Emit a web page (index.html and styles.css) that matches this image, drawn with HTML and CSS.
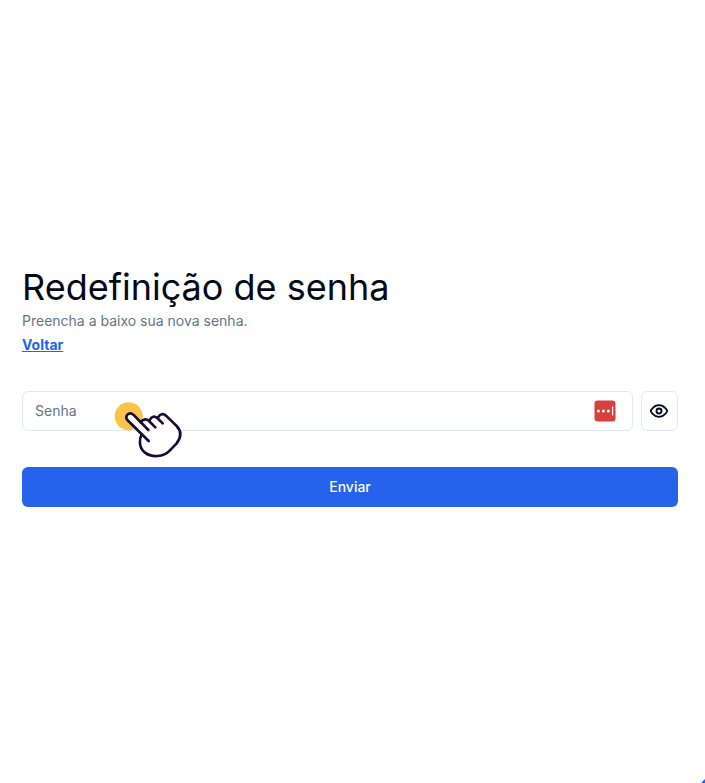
FILE: index.html
```html
<!DOCTYPE html>
<html lang="pt-BR">
<head>
<meta charset="utf-8">
<title>Redefinição de senha</title>
<link rel="stylesheet" href="styles.css">
</head>
<body>
<main class="page">
  <h1 class="title">Redefinição de senha</h1>
  <p class="subtitle">Preencha a baixo sua nova senha.</p>
  <a class="back" href="#">Voltar</a>
  <form class="form">
    <div class="row">
      <div class="field">
        <span class="placeholder">Senha</span>
        <svg class="manager" viewBox="0 0 22 22" aria-hidden="true">
          <rect x=".5" y=".5" width="21" height="21" rx="3" fill="#d6403d"/>
          <g fill="#fff"><circle cx="4.4" cy="11" r="1.5"/><circle cx="9.3" cy="11" r="1.5"/><circle cx="14.3" cy="11" r="1.5"/><rect x="18" y="6.5" width="1.2" height="9"/></g>
        </svg>
      </div>
      <button class="toggle" type="button" aria-label="Mostrar senha">
        <svg class="eye" viewBox="0 0 24 24" fill="none" stroke="currentColor" stroke-width="2.2" stroke-linecap="round" stroke-linejoin="round"><path d="M2 12s3-7 10-7 10 7 10 7-3 7-10 7-10-7-10-7Z"/><circle cx="12" cy="12" r="3"/></svg>
      </button>
      <svg class="pointer" viewBox="0 0 270 240" aria-hidden="true">
        <circle cx="71" cy="94" r="42" fill="#fbc34b"/>
        <path fill="#fff" d="M132 168L67 105C57 94 72 78 85 89L107 111Q120 97 134 107Q144 88 159 98Q169 81 183 92L215 123C230 139 228 158 215 175L194 197C176 217 139 218 120 203C101 188 102 162 110 148Z"/>
        <g fill="none" stroke="#150b36" stroke-width="8" stroke-linecap="round" stroke-linejoin="round">
          <path d="M131 168L67 105C57 94 72 78 85 89L130 135"/>
          <path d="M107 111Q120 97 132 108L151 127"/>
          <path d="M134 105Q144 88 157 99L173 115"/>
          <path d="M159 97Q169 81 183 92L215 123C230 139 228 158 215 175L194 197C176 217 139 218 120 203C101 188 102 162 110 148"/>
        </g>
      </svg>
    </div>
    <button class="submit" type="button">Enviar</button>
  </form>
  <span class="corner"></span>
</main>
</body>
</html>
```

FILE: styles.css
```css
* { box-sizing: border-box; }
body { margin: 0; background: #fff; color: #020817; font-family: Inter, sans-serif; font-size: 14px; }
.page { position: relative; height: 783px; padding: 0 27px 10px 22px; display: flex; flex-direction: column; justify-content: center; overflow: hidden; }
.title { margin: 0; font-size: 36px; line-height: 40px; font-weight: 400; white-space: nowrap; }
.subtitle { margin: 4px 0; line-height: 20px; color: #64748b; }
.back { align-self: flex-start; line-height: 20px; font-weight: 700; color: #2563eb; text-decoration: underline; }
.form { margin-top: 36px; display: flex; flex-direction: column; gap: 36px; }
.row { position: relative; display: flex; gap: 8px; }
.field { flex: 1; height: 40px; border: 1px solid #e2e8f0; border-radius: 6px; padding: 0 16px 0 12px; display: flex; align-items: center; justify-content: space-between; }
.placeholder { color: #64748b; }
.manager { width: 22px; height: 22px; }
.toggle { width: 37px; height: 40px; padding: 0 1px 0 0; border: 1px solid #e2e8f0; border-radius: 6px; background: #fff; color: #020817; display: flex; align-items: center; justify-content: center; }
.eye { width: 20px; height: 20px; }
.pointer { position: absolute; left: 83px; top: -6px; width: 90px; height: 80px; }
.submit { height: 40px; border: 0; border-radius: 6px; background: #2563eb; color: #f8fafc; font: 500 14px/20px Inter, sans-serif; }
.corner { position: absolute; right: 0; bottom: 0; width: 4px; height: 4px; background: #2563eb; clip-path: polygon(100% 0, 100% 100%, 0 100%); }
```
